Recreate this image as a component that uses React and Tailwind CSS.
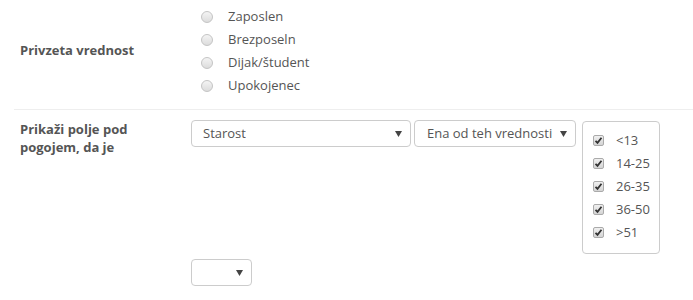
const statuses = ['Zaposlen', 'Brezposeln', 'Dijak/študent', 'Upokojenec'];
const ages = ['<13', '14-25', '26-35', '36-50', '>51'];

function Arrow() {
  return (
    <svg width="7" height="6" viewBox="0 0 7 6" className="shrink-0">
      <path d="M0 0 H7 L3.5 6 Z" fill="#444" />
    </svg>
  );
}

function FakeSelect({ value, className }) {
  return (
    <div
      className={`h-[27px] flex items-center justify-between border border-[#ccc] rounded-[4px] bg-white pl-[11px] pr-[8px] ${className}`}
    >
      <span className="text-[13px] text-[#555] truncate">{value}</span>
      <Arrow />
    </div>
  );
}

function Radio() {
  return (
    <span className="w-[12px] h-[12px] rounded-full border border-[#c4c4c4] bg-gradient-to-b from-[#f4f4f4] to-[#dcdcdc] shrink-0" />
  );
}

function Check() {
  return (
    <span className="w-[11px] h-[11px] rounded-[2px] border border-[#aaa] bg-gradient-to-b from-[#f0f0f0] to-[#d4d4d4] flex items-center justify-center shrink-0">
      <svg width="9" height="9" viewBox="0 0 9 9">
        <path d="M1.5 4.8 L3.5 6.8 L7.5 1.8" stroke="#333" strokeWidth="1.8" fill="none" />
      </svg>
    </span>
  );
}

export default function App() {
  return (
    <div
      className="w-[693px] h-[300px] bg-white pl-[14px] overflow-hidden"
      style={{ fontFamily: '"Open Sans", sans-serif' }}
    >
      <div className="flex items-start border-b border-[#eee] h-[110px]">
        <div className="w-[177px] pl-[6px] mt-[41px] text-[13px] leading-[18px] font-bold text-[#555]">
          Privzeta vrednost
        </div>
        <div className="flex flex-col pt-[5px] pl-[10px]">
          {statuses.map((s) => (
            <label key={s} className="flex items-center h-[23px]">
              <Radio />
              <span className="ml-[15px] text-[13px] text-[#555]">{s}</span>
            </label>
          ))}
        </div>
      </div>

      <div className="flex pt-[10px]">
        <div className="w-[177px] pl-[6px] text-[13px] font-bold text-[#555] leading-[18px]">
          Prikaži polje pod
          <br />
          pogojem, da je
        </div>
        <div className="flex flex-col">
          <div className="flex items-start">
            <FakeSelect value="Starost" className="w-[220px]" />
            <FakeSelect value="Ena od teh vrednosti" className="w-[162px] ml-[3px] pl-[12px]" />
            <div className="ml-[6px] mt-px w-[78px] h-[133px] border border-[#ccc] rounded-[4px] pl-[10px] pt-[7px]">
              {ages.map((a) => (
                <label key={a} className="flex items-center h-[23px]">
                  <Check />
                  <span className="ml-[12px] text-[13px] text-[#555]">{a}</span>
                </label>
              ))}
            </div>
          </div>
          <FakeSelect value="" className="w-[61px] mt-[5px]" />
        </div>
      </div>
    </div>
  );
}
